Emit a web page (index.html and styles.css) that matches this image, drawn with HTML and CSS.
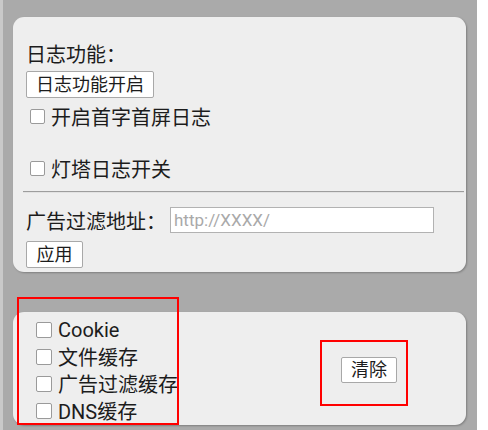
FILE: index.html
```html
<!DOCTYPE html>
<html lang="zh">
<head>
  <meta charset="UTF-8">
  <title>日志设置</title>
  <link rel="stylesheet" href="styles.css">
</head>
<body>
  <div class="page">
    <div class="card card-log">
      <div class="label-line">日志功能：</div>
      <button class="btn btn-log">日志功能开启</button>
      <label class="check-line first-check"><input type="checkbox"> 开启首字首屏日志</label>
      <label class="check-line beacon-check"><input type="checkbox"> 灯塔日志开关</label>
      <hr class="divider">
      <div class="filter-line">
        <span>广告过滤地址：</span>
        <input class="filter-input" type="text" placeholder="http://XXXX/">
      </div>
      <button class="btn btn-apply">应用</button>
    </div>

    <div class="card card-cache">
      <div class="cache-list">
        <label class="cache-item"><input type="checkbox"> Cookie</label>
        <label class="cache-item"><input type="checkbox"> 文件缓存</label>
        <label class="cache-item"><input type="checkbox"> 广告过滤缓存</label>
        <label class="cache-item"><input type="checkbox"> DNS缓存</label>
      </div>
      <button class="btn btn-clear">清除</button>
    </div>

    <div class="mark mark-list"></div>
    <div class="mark mark-clear"></div>
  </div>
</body>
</html>
```

FILE: styles.css
```css
* {
  margin: 0;
  padding: 0;
  box-sizing: border-box;
}

body {
  width: 488px;
  height: 430px;
  overflow: hidden;
  background: #fff;
  font-family: Roboto, "Noto Sans CJK SC", sans-serif;
  color: #1c1c1c;
}

.page {
  position: relative;
  width: 477px;
  height: 430px;
  background: #aaaaaa;
  border-left: 3px solid #c9c9c9;
  padding: 17px 11px 0 10px;
}

.card {
  background: #eeeeee;
  border-radius: 11px;
  box-shadow: 1px 1px 2px rgba(0, 0, 0, 0.25);
}

/* bloque de logs */
.card-log {
  height: 255px;
  padding: 25px 2px 0 10px;
}

.label-line {
  padding-left: 3px;
  height: 26px;
  line-height: 26px;
  font-size: 20px;
}

.btn {
  display: block;
  background: #fff;
  border: 1px solid #a8a8a8;
  border-radius: 2px;
  font-family: Roboto, "Noto Sans CJK SC", sans-serif;
  color: #1c1c1c;
  font-size: 18px;
  line-height: 25px;
  height: 27px;
}

.btn-log {
  margin: 3px 0 0 3px;
  width: 128px;
}

.check-line {
  display: flex;
  align-items: center;
  height: 26px;
  padding-left: 3px;
  font-size: 20px;
  white-space: pre;
}

.first-check {
  margin-top: 5px;
}

.beacon-check {
  margin-top: 26px;
}

input[type="checkbox"] {
  appearance: none;
  -webkit-appearance: none;
  flex: none;
  width: 15px;
  height: 15px;
  margin: 0 1px 0 4px;
  background: #fff;
  border: 1px solid #9a9a9a;
  border-radius: 2px;
}

.divider {
  margin-top: 10px;
  border: none;
  border-top: 1px solid #9d9d9d;
  border-bottom: 1px solid #e2e2e2;
}

.filter-line {
  display: flex;
  align-items: center;
  margin-top: 14px;
  padding-left: 3px;
  height: 26px;
  font-size: 20px;
}

.filter-input {
  margin-left: 4px;
  width: 264px;
  height: 26px;
  border: 1px solid #b2b2b2;
  background: #fff;
  padding: 0 3px;
  font-family: Roboto, "Noto Sans CJK SC", sans-serif;
  font-size: 17px;
}

.filter-input::placeholder {
  color: #a9a9a9;
}

.btn-apply {
  margin: 8px 0 0 3px;
  width: 57px;
}

/* bloque de caché */
.card-cache {
  margin-top: 40px;
  height: 113px;
  padding: 4px 69px 1px 19px;
  display: flex;
  align-items: center;
}

.cache-list {
  display: flex;
  flex-direction: column;
  align-self: flex-start;
}

.cache-item {
  display: flex;
  align-items: center;
  height: 27px;
  font-size: 20px;
  white-space: pre;
}

.cache-item input[type="checkbox"] {
  width: 16px;
  height: 16px;
}

.btn-clear {
  margin-left: auto;
  width: 56px;
  height: 26px;
  line-height: 24px;
}

/* marcas rojas */
.mark {
  position: absolute;
  border: 2px solid #ff0000;
}

.mark-list {
  left: 14px;
  top: 297px;
  width: 162px;
  height: 128px;
}

.mark-clear {
  left: 317px;
  top: 340px;
  width: 88px;
  height: 66px;
}
```
